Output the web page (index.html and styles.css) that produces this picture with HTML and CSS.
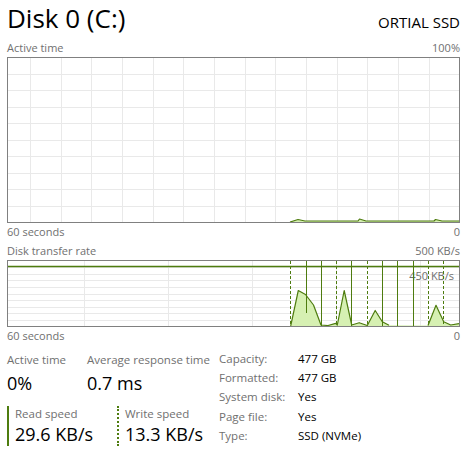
FILE: index.html
```html
<!DOCTYPE html>
<html>
<head>
<meta charset="utf-8">
<link rel="stylesheet" href="styles.css">
</head>
<body>
<div class="page">
  <header class="head">
    <h1 class="title">Disk 0 (C:)</h1>
    <div class="model">ORTIAL SSD</div>
  </header>

  <div class="axis axis-top"><span>Active time</span><span>100%</span></div>
  <div class="chart chart-active">
    <svg width="451" height="164" viewBox="0 0 451 164">
      <g class="grid">
        <path d="M22.5,0V164M53.5,0V164M83.5,0V164M114.5,0V164M145.5,0V164M175.5,0V164M206.5,0V164M237.5,0V164M267.5,0V164M298.5,0V164M329.5,0V164M359.5,0V164M390.5,0V164M421.5,0V164"/>
        <path d="M0,16.5H451M0,32.5H451M0,49.5H451M0,65.5H451M0,82.5H451M0,98.5H451M0,115.5H451M0,131.5H451M0,148.5H451"/>
      </g>
      <path class="area" d="M282,164 L290,161.5 L297,163 L350,163 L351.5,161 L358,163 L426,163 L427.5,161.5 L434,163 L451,163 L451,164 Z"/>
      <path class="line" d="M282,164 L290,161.5 L297,163 L350,163 L351.5,161 L358,163 L426,163 L427.5,161.5 L434,163 L451,163"/>
    </svg>
  </div>
  <div class="axis axis-bottom"><span>60 seconds</span><span>0</span></div>

  <div class="axis axis-top"><span>Disk transfer rate</span><span>500 KB/s</span></div>
  <div class="chart chart-rate">
    <svg width="451" height="65" viewBox="0 0 451 65">
      <g class="grid">
        <path d="M0,6.5H451M0,13.5H451M0,19.5H451M0,26.5H451M0,33.5H451M0,39.5H451M0,46.5H451M0,52.5H451M0,59.5H451"/>
        <path d="M76.5,0V65M160.5,0V65M244.5,0V65M328.5,0V65M412.5,0V65"/>
      </g>
      <text class="scale" x="446" y="19" text-anchor="end">450 KB/s</text>
      <path class="area" d="M282.7,65 L290.3,29.5 L297.5,33.5 L305.5,44 L313,64 L320,64.5 L327.7,62.3 L329.3,64 L336.2,29.5 L343.7,64 L351.2,61.7 L359.3,64.5 L367.2,49.5 L374.3,60.7 L381,64.3 L420,64.5 L428,44.3 L435.7,60.7 L442.7,64 L451,62.7 L451,65 Z"/>
      <path class="line" d="M282.7,65 L290.3,29.5 L297.5,33.5 L305.5,44 L313,64 L320,64.5 L327.7,62.3 L329.3,64 L336.2,29.5 L343.7,64 L351.2,61.7 L359.3,64.5 L367.2,49.5 L374.3,60.7 L381,64.3 M420,64.5 L428,44.3 L435.7,60.7 L442.7,64 L451,62.7"/>
      <path class="cap" d="M0,5.5H451"/>
      <path class="spike" d="M298.5,0V52M313.5,0V65M343.5,0V65M374.5,0V65M389.5,0V65M405.5,0V65"/>
      <path class="spike dashed" d="M282.5,0V65M328.5,0V65M359.5,0V65M420.5,0V65M435.5,0V65"/>
    </svg>
  </div>
  <div class="axis axis-bottom"><span>60 seconds</span><span>0</span></div>

  <section class="stats">
    <div class="stats-left">
      <div class="stat-row">
        <div class="stat stat-active">
          <div class="stat-label">Active time</div>
          <div class="stat-value">0%</div>
        </div>
        <div class="stat">
          <div class="stat-label">Average response time</div>
          <div class="stat-value">0.7 ms</div>
        </div>
      </div>
      <div class="stat-row speeds">
        <div class="speed speed-read">
          <div class="stat-label">Read speed</div>
          <div class="stat-value">29.6 KB/s</div>
        </div>
        <div class="speed speed-write">
          <div class="stat-label">Write speed</div>
          <div class="stat-value">13.3 KB/s</div>
        </div>
      </div>
    </div>
    <dl class="info">
      <dt>Capacity:</dt><dd>477 GB</dd>
      <dt>Formatted:</dt><dd>477 GB</dd>
      <dt>System disk:</dt><dd>Yes</dd>
      <dt>Page file:</dt><dd>Yes</dd>
      <dt>Type:</dt><dd>SSD (NVMe)</dd>
    </dl>
  </section>
</div>
</body>
</html>
```

FILE: styles.css
```css
* { box-sizing: border-box; }
html, body { margin: 0; padding: 0; background: #ffffff; }
body {
  font-family: "Open Sans", "Noto Sans", sans-serif;
  color: #000;
  width: 468px;
  height: 453px;
  overflow: hidden;
}
.page {
  padding: 0 8px 0 7px;
}
.head {
  display: flex;
  justify-content: space-between;
  align-items: baseline;
  height: 36px;
}
.title {
  margin: 0;
  font-weight: 400;
  font-size: 26px;
  line-height: 36px;
  letter-spacing: 0;
}
.model {
  font-size: 15px;
  line-height: 36px;
}
.axis {
  display: flex;
  justify-content: space-between;
  font-size: 11px;
  line-height: 15px;
  color: #707070;
  height: 15px;
}
.axis-top { margin-top: 4px; }
.axis-bottom { margin-top: 1px; }
.chart {
  margin-top: 2px;
  border: 1px solid #808080;
  width: 453px;
  background: #fff;
}
.chart svg { display: block; }
.chart-active { height: 166px; }
.chart-rate { height: 67px; }
.grid path { stroke: #e9e9e9; stroke-width: 1; fill: none; }
.area { fill: #d6f0b2; stroke: none; }
.line { fill: none; stroke: #4e7c0f; stroke-width: 1.2; stroke-linejoin: round; }
.cap { stroke: #4e7c0f; stroke-width: 1.3; fill: none; }
.spike { stroke: #4e7c0f; stroke-width: 1; fill: none; }
.spike.dashed { stroke-dasharray: 3 2; }
.scale { font-family: "Open Sans", "Noto Sans", sans-serif; font-size: 11px; fill: #707070; }

.stats {
  display: flex;
  margin-top: 7px;
}
.stats-left {
  width: 212px;
  padding-top: 2px;
}
.stat-row { display: flex; }
.stat-active { width: 80px; }
.stat-label {
  font-size: 11.5px;
  line-height: 16px;
  color: #707070;
  white-space: nowrap;
}
.stat-value {
  font-size: 18px;
  line-height: 24px;
  margin-top: 3px;
  white-space: nowrap;
}
.speeds { margin-top: 11px; }
.speed .stat-value { margin-top: 0; }
.speed {
  height: 40px;
  padding-left: 6px;
}
.speed-read {
  width: 110px;
  border-left: 2px solid #4e7c0f;
}
.speed-write {
  border-left: 2px dotted #4e7c0f;
}
.info {
  margin: 0;
  display: grid;
  grid-template-columns: 79px auto;
  font-size: 11.5px;
  line-height: 18px;
}
.info dt { color: #707070; }
.info dd { margin: 0; color: #000; }
```
